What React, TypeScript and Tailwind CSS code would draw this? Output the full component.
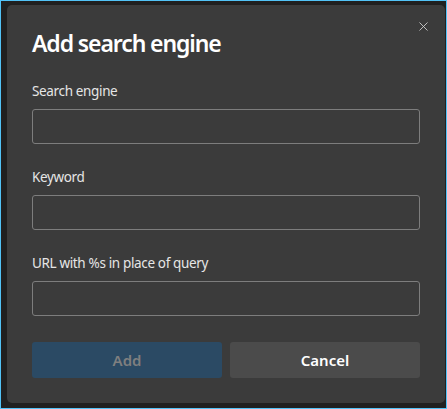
import { X } from 'lucide-react';

const Field = ({ label, first }: { label: string; first?: boolean }) => (
  <div className={first ? 'mt-[22px]' : 'mt-[23px]'}>
    <label className="block text-[13.5px] leading-[20px] tracking-[-0.35px] text-[#e6e6e6]">{label}</label>
    <input
      type="text"
      className="mt-[8px] block h-[35px] w-full rounded-[3px] border border-[#7d7d7d] bg-transparent px-2 text-[14px] text-white outline-none"
    />
  </div>
);

export default function App() {
  return (
    <div
      className="h-[409px] w-[447px] border border-[#52c3f7] bg-[#202020] pl-[6px] pt-[4px]"
      style={{ fontFamily: '"Noto Sans", "Open Sans", sans-serif' }}
    >
      <div className="relative w-[438px] rounded-[5px] bg-[#3b3b3b] px-[25px] pb-[25px] pt-[22px]">
        <button className="absolute right-[11px] top-[11px] p-[3px] text-[#d0d0d0]">
          <X size={15} strokeWidth={1.4} />
        </button>

        <h1 className="text-[23px] font-semibold leading-[32px] tracking-[-1.1px] text-white">Add search engine</h1>

        <Field label="Search engine" first />
        <Field label="Keyword" />
        <Field label="URL with %s in place of query" />

        <div className="mt-[26px] flex gap-[8px]">
          <button className="h-[36px] flex-1 rounded-[3px] bg-[#2b4a64] text-[15px] font-semibold text-[#7f7f7f]">
            Add
          </button>
          <button className="h-[36px] flex-1 rounded-[3px] bg-[#4b4b4b] text-[15px] font-semibold text-white">
            Cancel
          </button>
        </div>
      </div>
    </div>
  );
}
